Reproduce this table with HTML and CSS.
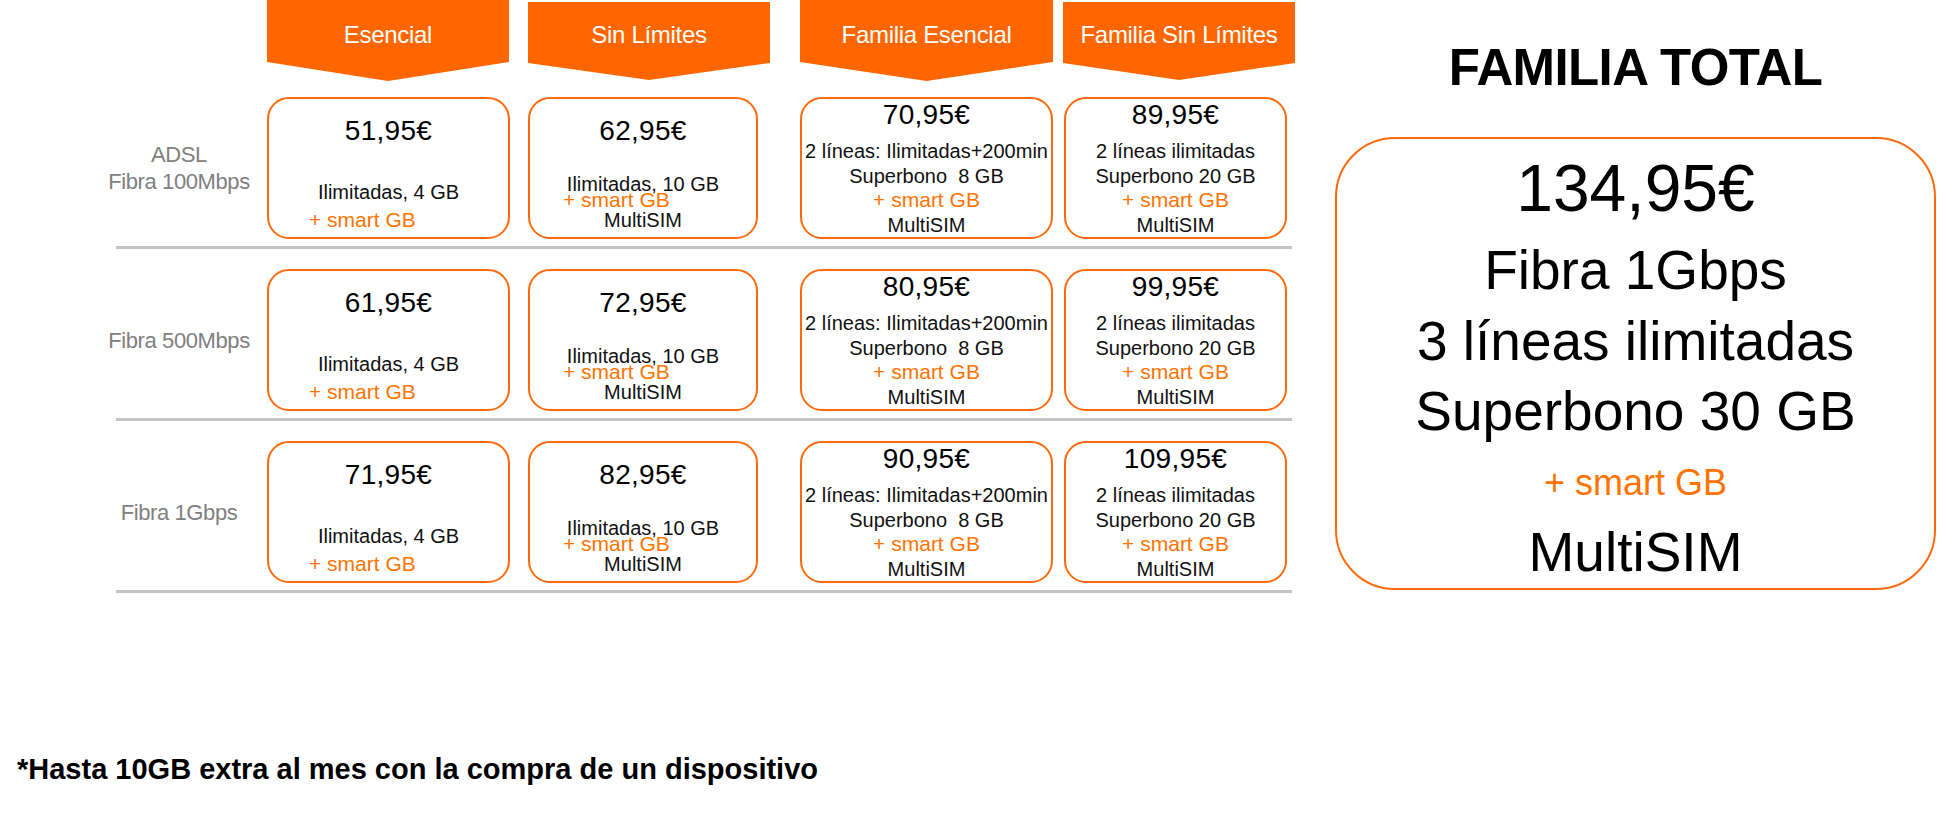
FILE: index.html
```html
<!DOCTYPE html>
<html lang="es">
<head>
<meta charset="utf-8">
<title>Tarifas</title>
<link rel="stylesheet" href="styles.css">
</head>
<body>
<div class="page">
  <div class="top">
    <div class="table">
      <div class="head">
        <div class="spacer"></div>
        <div class="cell c1"><div class="banner">Esencial</div></div>
        <div class="cell c2"><div class="banner alt">Sin Límites</div></div>
        <div class="cell c3"><div class="banner">Familia Esencial</div></div>
        <div class="cell c4"><div class="banner alt">Familia Sin Límites</div></div>
      </div>

      <div class="row first">
        <div class="label"><span>ADSL</span><span>Fibra 100Mbps</span></div>
        <div class="cell c1"><div class="card k-basic">
          <div class="price">51,95€</div>
          <div class="l-basic">Ilimitadas, 4 GB</div>
          <div class="smart s-basic">+ smart GB</div>
        </div></div>
        <div class="cell c2"><div class="card k-multi">
          <div class="price">62,95€</div>
          <div class="l-multi">Ilimitadas, 10 GB</div>
          <div class="smart s-multi">+ smart GB</div>
          <div class="m-multi">MultiSIM</div>
        </div></div>
        <div class="cell c3"><div class="card k-fam">
          <div class="price">70,95€</div>
          <div class="fl first-fl">2 líneas: Ilimitadas+200min</div>
          <div class="fl">Superbono&nbsp; 8 GB</div>
          <div class="fl smart">+ smart GB</div>
          <div class="fl">MultiSIM</div>
        </div></div>
        <div class="cell c4"><div class="card k-fam">
          <div class="price">89,95€</div>
          <div class="fl first-fl">2 líneas ilimitadas</div>
          <div class="fl">Superbono 20 GB</div>
          <div class="fl smart">+ smart GB</div>
          <div class="fl">MultiSIM</div>
        </div></div>
      </div>

      <div class="row">
        <div class="label"><span>Fibra 500Mbps</span></div>
        <div class="cell c1"><div class="card k-basic">
          <div class="price">61,95€</div>
          <div class="l-basic">Ilimitadas, 4 GB</div>
          <div class="smart s-basic">+ smart GB</div>
        </div></div>
        <div class="cell c2"><div class="card k-multi">
          <div class="price">72,95€</div>
          <div class="l-multi">Ilimitadas, 10 GB</div>
          <div class="smart s-multi">+ smart GB</div>
          <div class="m-multi">MultiSIM</div>
        </div></div>
        <div class="cell c3"><div class="card k-fam">
          <div class="price">80,95€</div>
          <div class="fl first-fl">2 líneas: Ilimitadas+200min</div>
          <div class="fl">Superbono&nbsp; 8 GB</div>
          <div class="fl smart">+ smart GB</div>
          <div class="fl">MultiSIM</div>
        </div></div>
        <div class="cell c4"><div class="card k-fam">
          <div class="price">99,95€</div>
          <div class="fl first-fl">2 líneas ilimitadas</div>
          <div class="fl">Superbono 20 GB</div>
          <div class="fl smart">+ smart GB</div>
          <div class="fl">MultiSIM</div>
        </div></div>
      </div>

      <div class="row">
        <div class="label"><span>Fibra 1Gbps</span></div>
        <div class="cell c1"><div class="card k-basic">
          <div class="price">71,95€</div>
          <div class="l-basic">Ilimitadas, 4 GB</div>
          <div class="smart s-basic">+ smart GB</div>
        </div></div>
        <div class="cell c2"><div class="card k-multi">
          <div class="price">82,95€</div>
          <div class="l-multi">Ilimitadas, 10 GB</div>
          <div class="smart s-multi">+ smart GB</div>
          <div class="m-multi">MultiSIM</div>
        </div></div>
        <div class="cell c3"><div class="card k-fam">
          <div class="price">90,95€</div>
          <div class="fl first-fl">2 líneas: Ilimitadas+200min</div>
          <div class="fl">Superbono&nbsp; 8 GB</div>
          <div class="fl smart">+ smart GB</div>
          <div class="fl">MultiSIM</div>
        </div></div>
        <div class="cell c4"><div class="card k-fam">
          <div class="price">109,95€</div>
          <div class="fl first-fl">2 líneas ilimitadas</div>
          <div class="fl">Superbono 20 GB</div>
          <div class="fl smart">+ smart GB</div>
          <div class="fl">MultiSIM</div>
        </div></div>
      </div>
    </div>

    <div class="total">
      <h1 class="total-title">FAMILIA TOTAL</h1>
      <div class="total-card">
        <div class="t-price">134,95€</div>
        <div class="t-line t-fibra">Fibra 1Gbps</div>
        <div class="t-line t-lineas">3 líneas ilimitadas</div>
        <div class="t-line">Superbono 30 GB</div>
        <div class="t-smart">+ smart GB</div>
        <div class="t-line t-multi">MultiSIM</div>
      </div>
    </div>
  </div>

  <p class="note">*Hasta 10GB extra al mes con la compra de un dispositivo</p>
</div>
</body>
</html>
```

FILE: styles.css
```css
* { box-sizing: border-box; }

html, body {
  margin: 0;
  padding: 0;
  background: #ffffff;
}

body {
  font-family: "Liberation Sans", Arial, sans-serif;
  color: #000;
}

.page {
  width: 1938px;
  height: 813px;
  overflow: hidden;
}

.top {
  display: flex;
  align-items: flex-start;
}

.table {
  margin-left: 116px;
  width: 1179px;
}

.head {
  display: flex;
  height: 81px;
}

.spacer { width: 151px; flex: none; }

.cell { flex: none; }
.c1 { width: 261px; }
.c2 { width: 272px; }
.c3 { width: 263px; }
.c4 { width: 232px; }

.banner {
  height: 81px;
  background: #ff6600;
  color: #fff;
  font-size: 24px;
  line-height: 62px;
  padding-top: 4px;
  text-align: center;
  white-space: nowrap;
  letter-spacing: -0.3px;
  clip-path: polygon(0 0, 100% 0, 100% 62px, 50% 100%, 0 62px);
}
.banner.alt {
  margin-top: 2px;
  height: 78px;
  padding-top: 2px;
  clip-path: polygon(0 0, 100% 0, 100% 61px, 50% 100%, 0 61px);
}
.c1 .banner, .c2 .banner { width: 242px; }
.c3 .banner { width: 253px; }
.c4 .banner { width: 232px; }

.row {
  display: flex;
  align-items: center;
  margin-top: 20px;
  margin-right: 3px;
  padding-bottom: 7px;
  border-bottom: 3px solid #c4c4c4;
}
.row.first { margin-top: 16px; }

.label {
  width: 126px;
  margin-right: 25px;
  flex: none;
  display: flex;
  flex-direction: column;
  align-items: center;
  color: #808080;
  font-size: 22px;
  line-height: 27px;
  white-space: nowrap;
  letter-spacing: -0.4px;
}

.card {
  height: 142px;
  border: 2px solid #ff6a0d;
  border-radius: 22px;
  text-align: center;
  font-size: 20px;
  white-space: nowrap;
  color: #111;
}
.c1 .card { width: 243px; }
.c2 .card { width: 230px; }
.c3 .card { width: 253px; }
.c4 .card { width: 223px; margin-left: 1px; }

.price {
  font-size: 28px;
  line-height: 32px;
  color: #000;
  letter-spacing: 0.3px;
}

.smart { color: #ff7300; }

.k-basic { padding-top: 16px; }
.l-basic { margin-top: 33px; line-height: 24px; }
.s-basic {
  margin-top: 2px;
  font-size: 21px;
  line-height: 28px;
  text-align: left;
  padding-left: 40px;
}

.k-multi { padding-top: 16px; }
.l-multi { margin-top: 28px; line-height: 18px; }
.s-multi {
  font-size: 21px;
  line-height: 14px;
  text-align: left;
  padding-left: 33px;
}
.m-multi { line-height: 26px; }

.k-fam { padding-top: 0; }
.fl { line-height: 24.5px; }
.fl.smart { font-size: 21px; }
.first-fl { margin-top: 8px; }

.total {
  margin-left: 40px;
  width: 601px;
  flex: none;
}

.total-title {
  margin: 38px 0 0;
  font-size: 51px;
  line-height: 60px;
  font-weight: 700;
  letter-spacing: -0.6px;
  text-align: center;
}

.total-card {
  margin-top: 39px;
  height: 453px;
  border: 2px solid #ff6a0d;
  border-radius: 60px;
  padding-top: 10px;
  text-align: center;
  white-space: nowrap;
}

.t-price {
  font-size: 66px;
  line-height: 78px;
}

.t-line {
  font-size: 55px;
  line-height: 70px;
}
.t-fibra { margin-top: 8px; }
.t-lineas { margin-top: 1px; }

.t-smart {
  margin-top: 12px;
  font-size: 36px;
  line-height: 50px;
  color: #ff7300;
}
.t-multi { margin-top: 9px; }

.note {
  margin: 158px 0 0 17px;
  font-size: 29px;
  line-height: 36px;
  font-weight: 700;
  white-space: nowrap;
}
```
